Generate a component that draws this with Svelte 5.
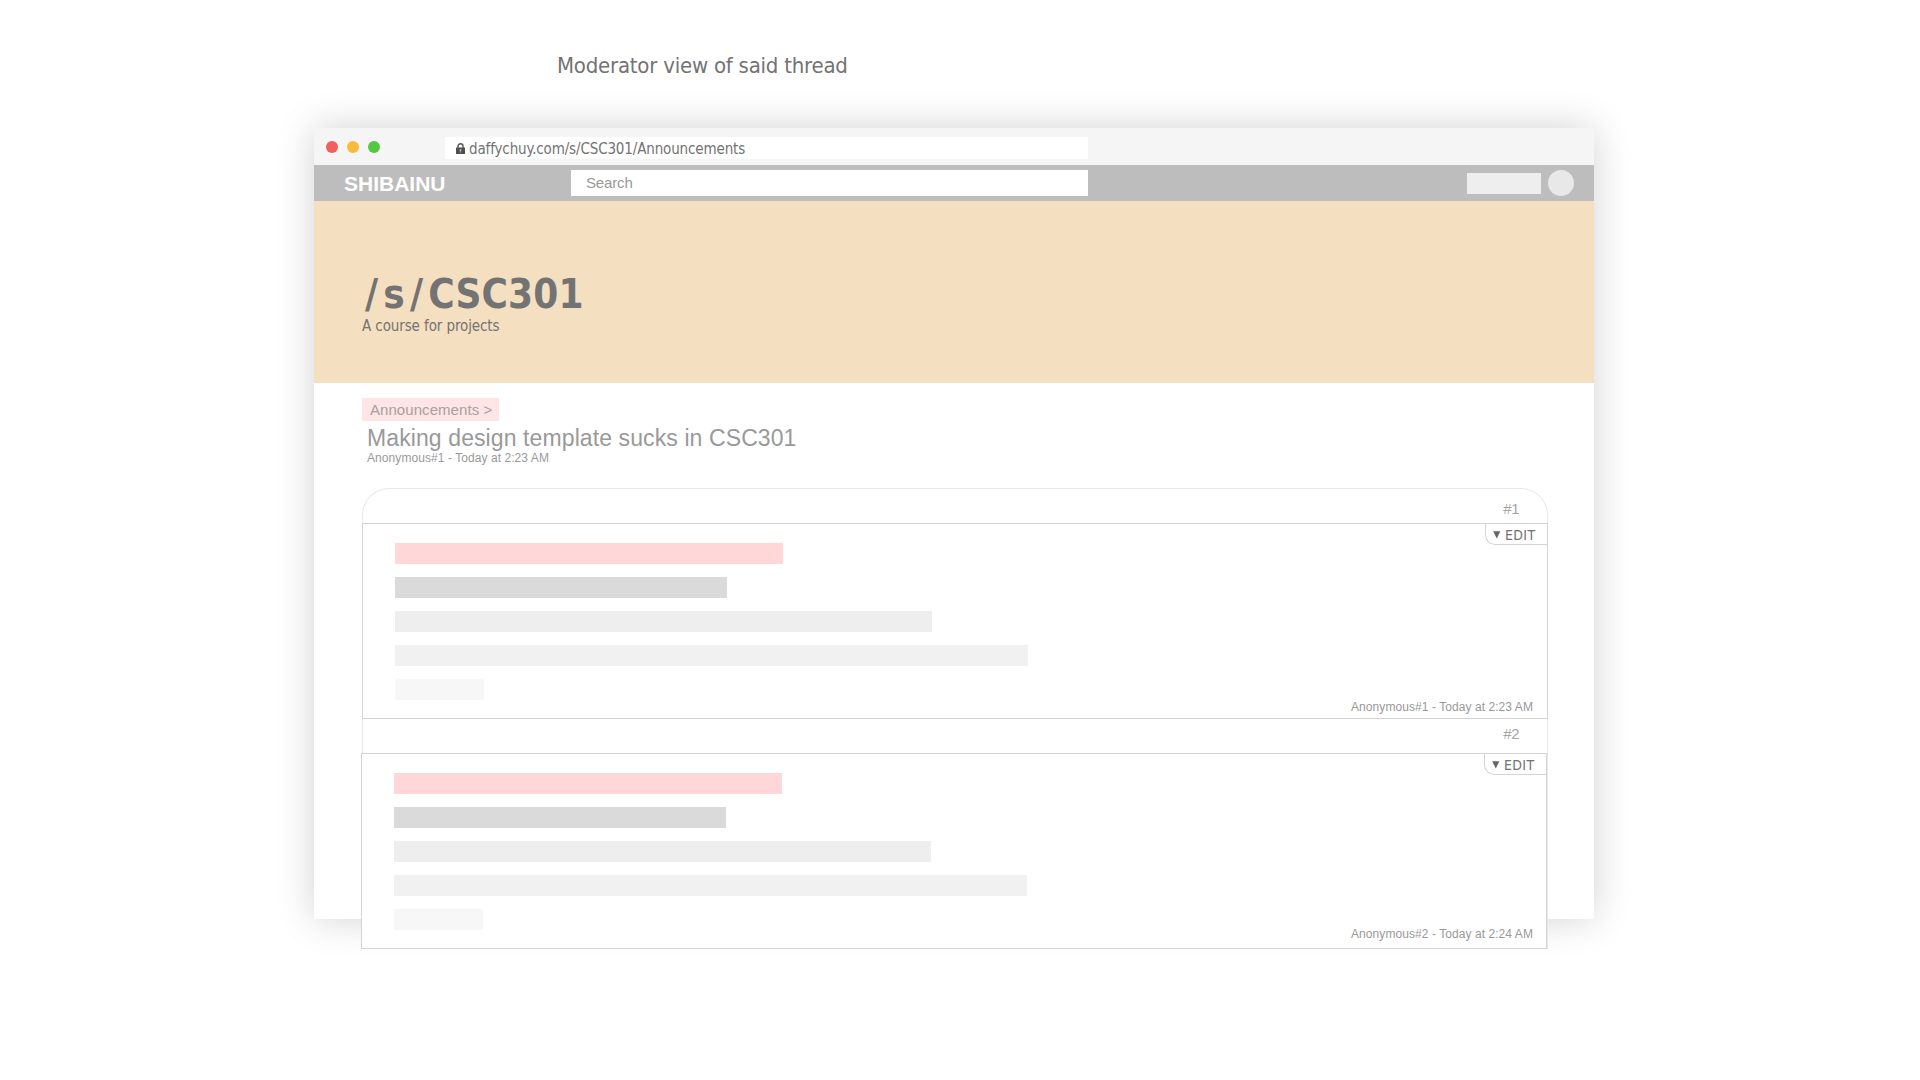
<script>
  const bars = [
    { width: 388, tone: 'pink' },
    { width: 332, tone: 'dark' },
    { width: 537, tone: 'mid' },
    { width: 633, tone: 'pale' },
    { width: 89, tone: 'faint' }
  ];

  const posts = [
    { id: 1, meta: 'Anonymous#1 - Today at 2:23 AM' },
    { id: 2, meta: 'Anonymous#2 - Today at 2:24 AM' }
  ];
</script>

<main class="page">
  <p class="caption">Moderator view of said thread</p>

  <section class="window">
    <div class="chrome">
      <div class="lights">
        <span class="dot red"></span>
        <span class="dot yellow"></span>
        <span class="dot green"></span>
      </div>
      <div class="url">
        <svg class="lock" width="9" height="11" viewBox="0 0 9 11">
          <path d="M2 5V3.1a2.5 2.4 0 0 1 5 0V5" fill="none" stroke="#555" stroke-width="1.4" />
          <rect x="0" y="4.5" width="9" height="6.5" rx="0.6" fill="#505050" />
          <path d="M3.7 6.3h1.6v1.3l-.4.4v1.5h-.8V8l-.4-.4z" fill="#c4c4c4" />
        </svg>
        <span class="address">daffychuy.com/s/CSC301/Announcements</span>
      </div>
    </div>

    <nav class="nav">
      <span class="brand">SHIBAINU</span>
      <div class="search">Search</div>
      <div class="account">
        <span class="pill"></span>
        <span class="avatar"></span>
      </div>
    </nav>

    <header class="hero">
      <h1><span class="prefix">/s/</span>CSC301</h1>
      <p>A course for projects</p>
    </header>

    <div class="content">
      <div class="crumb">Announcements &gt;</div>
      <h2>Making design template sucks in CSC301</h2>
      <p class="byline">Anonymous#1 - Today at 2:23 AM</p>

      <div class="thread">
        {#each posts as post, i (post.id)}
          <div class="number" class:reply={i > 0}>#{post.id}</div>
          <article class="post" class:reply={i > 0}>
            <div class="bars">
              {#each bars as bar}
                <div class="bar {bar.tone}" style="width: {bar.width}px"></div>
              {/each}
            </div>
            <p class="meta">{post.meta}</p>
            <div class="edit">
              <svg width="8" height="8" viewBox="0 0 8 8"><path d="M0.2 0.2h7.2L3.8 7.6z" fill="#666" /></svg>
              <span>EDIT</span>
            </div>
          </article>
        {/each}
      </div>
    </div>
  </section>
</main>

<style>
  :global(body) {
    background: #fff;
  }

  .page {
    box-sizing: border-box;
    width: 1920px;
    height: 1080px;
    overflow: hidden;
    padding-top: 51px;
    font-family: "Liberation Sans", Arial, sans-serif;
    color: #999;
  }

  h1,
  h2,
  p {
    margin: 0;
    font-weight: normal;
  }

  .caption,
  .address,
  .hero,
  .edit {
    font-family: "DejaVu Sans Condensed", Tahoma, sans-serif;
    color: #737373;
  }

  .caption {
    margin-left: 557px;
    font-size: 22px;
    line-height: 30px;
    letter-spacing: -0.23px;
  }

  .window {
    width: 1280px;
    height: 791px;
    margin: 47px 0 0 314px;
    background: #fff;
    box-shadow: 0 0 36px rgba(0, 0, 0, 0.18);
  }

  .chrome {
    box-sizing: border-box;
    display: flex;
    height: 37px;
    padding: 9px 0 0 12px;
    background: #f5f5f5;
  }

  .lights {
    display: flex;
    gap: 9px;
    width: 119px;
    padding-top: 4px;
  }

  .dot {
    width: 12px;
    height: 12px;
    border-radius: 50%;
  }

  .red {
    background: #f25e5a;
  }

  .yellow {
    background: #f9bc3a;
  }

  .green {
    background: #53c842;
  }

  .url {
    box-sizing: border-box;
    display: flex;
    gap: 4px;
    width: 643px;
    height: 22px;
    padding: 1px 0 0 11px;
    background: #fff;
  }

  .lock {
    flex: none;
    margin-top: 5px;
  }

  .address {
    font-size: 15px;
    line-height: 22px;
    letter-spacing: -0.14px;
  }

  .nav {
    display: flex;
    align-items: center;
    height: 36px;
    padding-right: 20px;
    background: #bdbdbd;
  }

  .brand {
    width: 227px;
    padding: 1px 0 0 30px;
    font-size: 21px;
    font-weight: bold;
    line-height: 35px;
    color: #fff;
  }

  .search {
    width: 502px;
    height: 26px;
    padding-left: 15px;
    background: #fff;
    font-size: 15px;
    line-height: 26px;
    letter-spacing: -0.15px;
  }

  .account {
    display: flex;
    align-items: center;
    gap: 7px;
    margin-left: auto;
  }

  .pill {
    width: 74px;
    height: 21px;
    background: #eee;
  }

  .avatar {
    width: 26px;
    height: 26px;
    border-radius: 50%;
    background: #e8e8e8;
  }

  .hero {
    box-sizing: border-box;
    height: 182px;
    padding: 70px 0 0 48px;
    background: #f5dfc1;
  }

  .hero h1 {
    padding: 1px 0 0 3px;
    font-size: 40px;
    font-weight: bold;
    line-height: 44px;
    letter-spacing: 0.1px;
  }

  .prefix {
    letter-spacing: 5.2px;
  }

  .hero p {
    font-size: 15px;
    line-height: 20px;
    letter-spacing: -0.1px;
  }

  .content {
    padding: 15px 0 0 48px;
  }

  .crumb {
    box-sizing: border-box;
    width: 137px;
    height: 23px;
    padding-left: 8px;
    background: #ffe5e5;
    font-size: 15px;
    line-height: 23px;
    letter-spacing: 0.06px;
    color: #a8a0a0;
  }

  h2 {
    margin-top: 4px;
    padding-left: 5px;
    font-size: 23px;
    line-height: 26px;
    letter-spacing: 0.1px;
  }

  .byline {
    padding-left: 5px;
    font-size: 12px;
    line-height: 14px;
    letter-spacing: 0.07px;
  }

  .thread {
    box-sizing: border-box;
    width: 1186px;
    height: 461px;
    margin-top: 23px;
    border: 1px solid #e8e8e8;
    border-bottom: 0;
    border-radius: 27px 27px 0 0;
  }

  .number {
    box-sizing: border-box;
    height: 34px;
    padding: 5px 28px 0 0;
    font-size: 15px;
    line-height: 29px;
    letter-spacing: -0.5px;
    text-align: right;
    color: #a5a5a5;
  }

  .number.reply {
    padding-top: 0;
    line-height: 30px;
  }

  .post {
    position: relative;
    box-sizing: border-box;
    display: flex;
    justify-content: space-between;
    align-items: flex-end;
    width: 1186px;
    height: 196px;
    margin-left: -1px;
    padding: 0 14px 3px 32px;
    border: 1px solid #d4d4d4;
    background: #fff;
  }

  .post.reply {
    margin-left: -2px;
    padding: 0 13px 6px 32px;
  }

  .bars {
    display: flex;
    flex-direction: column;
    align-self: flex-start;
    gap: 13px;
    padding-top: 19px;
  }

  .bar {
    height: 21px;
  }

  .pink {
    background: #ffd7d8;
  }

  .dark {
    background: #dadada;
  }

  .mid {
    background: #eee;
  }

  .pale {
    background: #f1f1f1;
  }

  .faint {
    background: #f7f7f7;
  }

  .meta {
    font-size: 12px;
    line-height: 16px;
    letter-spacing: 0.07px;
  }

  .edit {
    position: absolute;
    top: 0;
    right: 0;
    box-sizing: border-box;
    display: flex;
    gap: 4px;
    width: 62px;
    height: 21px;
    padding-left: 7px;
    border-left: 1px solid #d4d4d4;
    border-bottom: 1px solid #d4d4d4;
    border-bottom-left-radius: 10px;
    font-size: 14px;
    line-height: 22px;
    letter-spacing: 0.35px;
  }

  .edit svg {
    flex: none;
    margin-top: 7px;
  }
</style>
